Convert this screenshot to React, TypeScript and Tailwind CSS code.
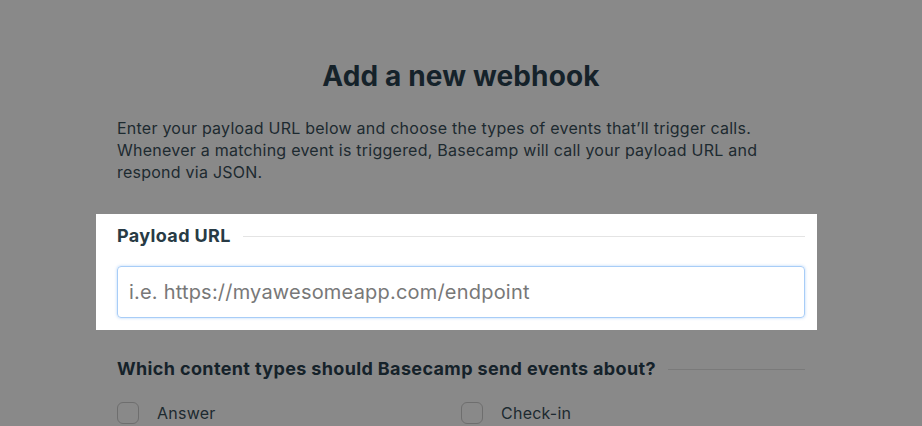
export default function App() {
  return (
    <div className="min-h-[426px] bg-[#898989] font-['Inter','Noto_Sans',sans-serif] text-[#1d2a30]">
      <div className="mx-auto w-[688px] pt-[58px]">
        <h1 className="text-center text-[28px] font-bold leading-[36px] tracking-[0.005em] text-[#15222a]">
          Add a new webhook
        </h1>

        <p className="mt-[23px] text-[16px] leading-[22px] tracking-[0.015em]">
          Enter your payload URL below and choose the types of events that’ll trigger calls.
          Whenever a matching event is triggered, Basecamp will call your payload URL and
          respond via JSON.
        </p>

        {/* highlighted section */}
        <div className="-ml-[21px] -mr-[12px] mt-[31px] bg-white pb-[12px] pl-[21px] pr-[12px] pt-[10px]">
          <div className="flex items-center gap-3">
            <h2 className="text-[18px] font-bold leading-[24px] tracking-[0.02em] text-[#283b45]">
              Payload URL
            </h2>
            <div className="h-px flex-1 bg-[#e4e4e4]" />
          </div>
          <input
            type="text"
            placeholder="i.e. https://myawesomeapp.com/endpoint"
            className="mt-[18px] h-[52px] w-full rounded-[4px] border border-[#a8cdf7] px-[11px] text-[20px] tracking-[0.01em] text-[#333] shadow-[0_0_3px_rgba(90,160,240,0.45)] outline-none placeholder:text-[#787878]"
          />
        </div>

        <div className="mt-[27px] flex items-center gap-3">
          <h2 className="text-[18px] font-bold leading-[24px] tracking-[0.02em] text-[#15222a]">
            Which content types should Basecamp send events about?
          </h2>
          <div className="h-px flex-1 bg-[#7a7a7a]" />
        </div>

        <div className="mt-[20px] grid grid-cols-2">
          {['Answer', 'Check-in'].map((label) => (
            <label key={label} className="flex items-center gap-[18px] text-[16px] tracking-[0.015em]">
              <span className="h-[22px] w-[22px] rounded-[6px] border border-[#6e6e6e]" />
              {label}
            </label>
          ))}
        </div>
      </div>
    </div>
  )
}
